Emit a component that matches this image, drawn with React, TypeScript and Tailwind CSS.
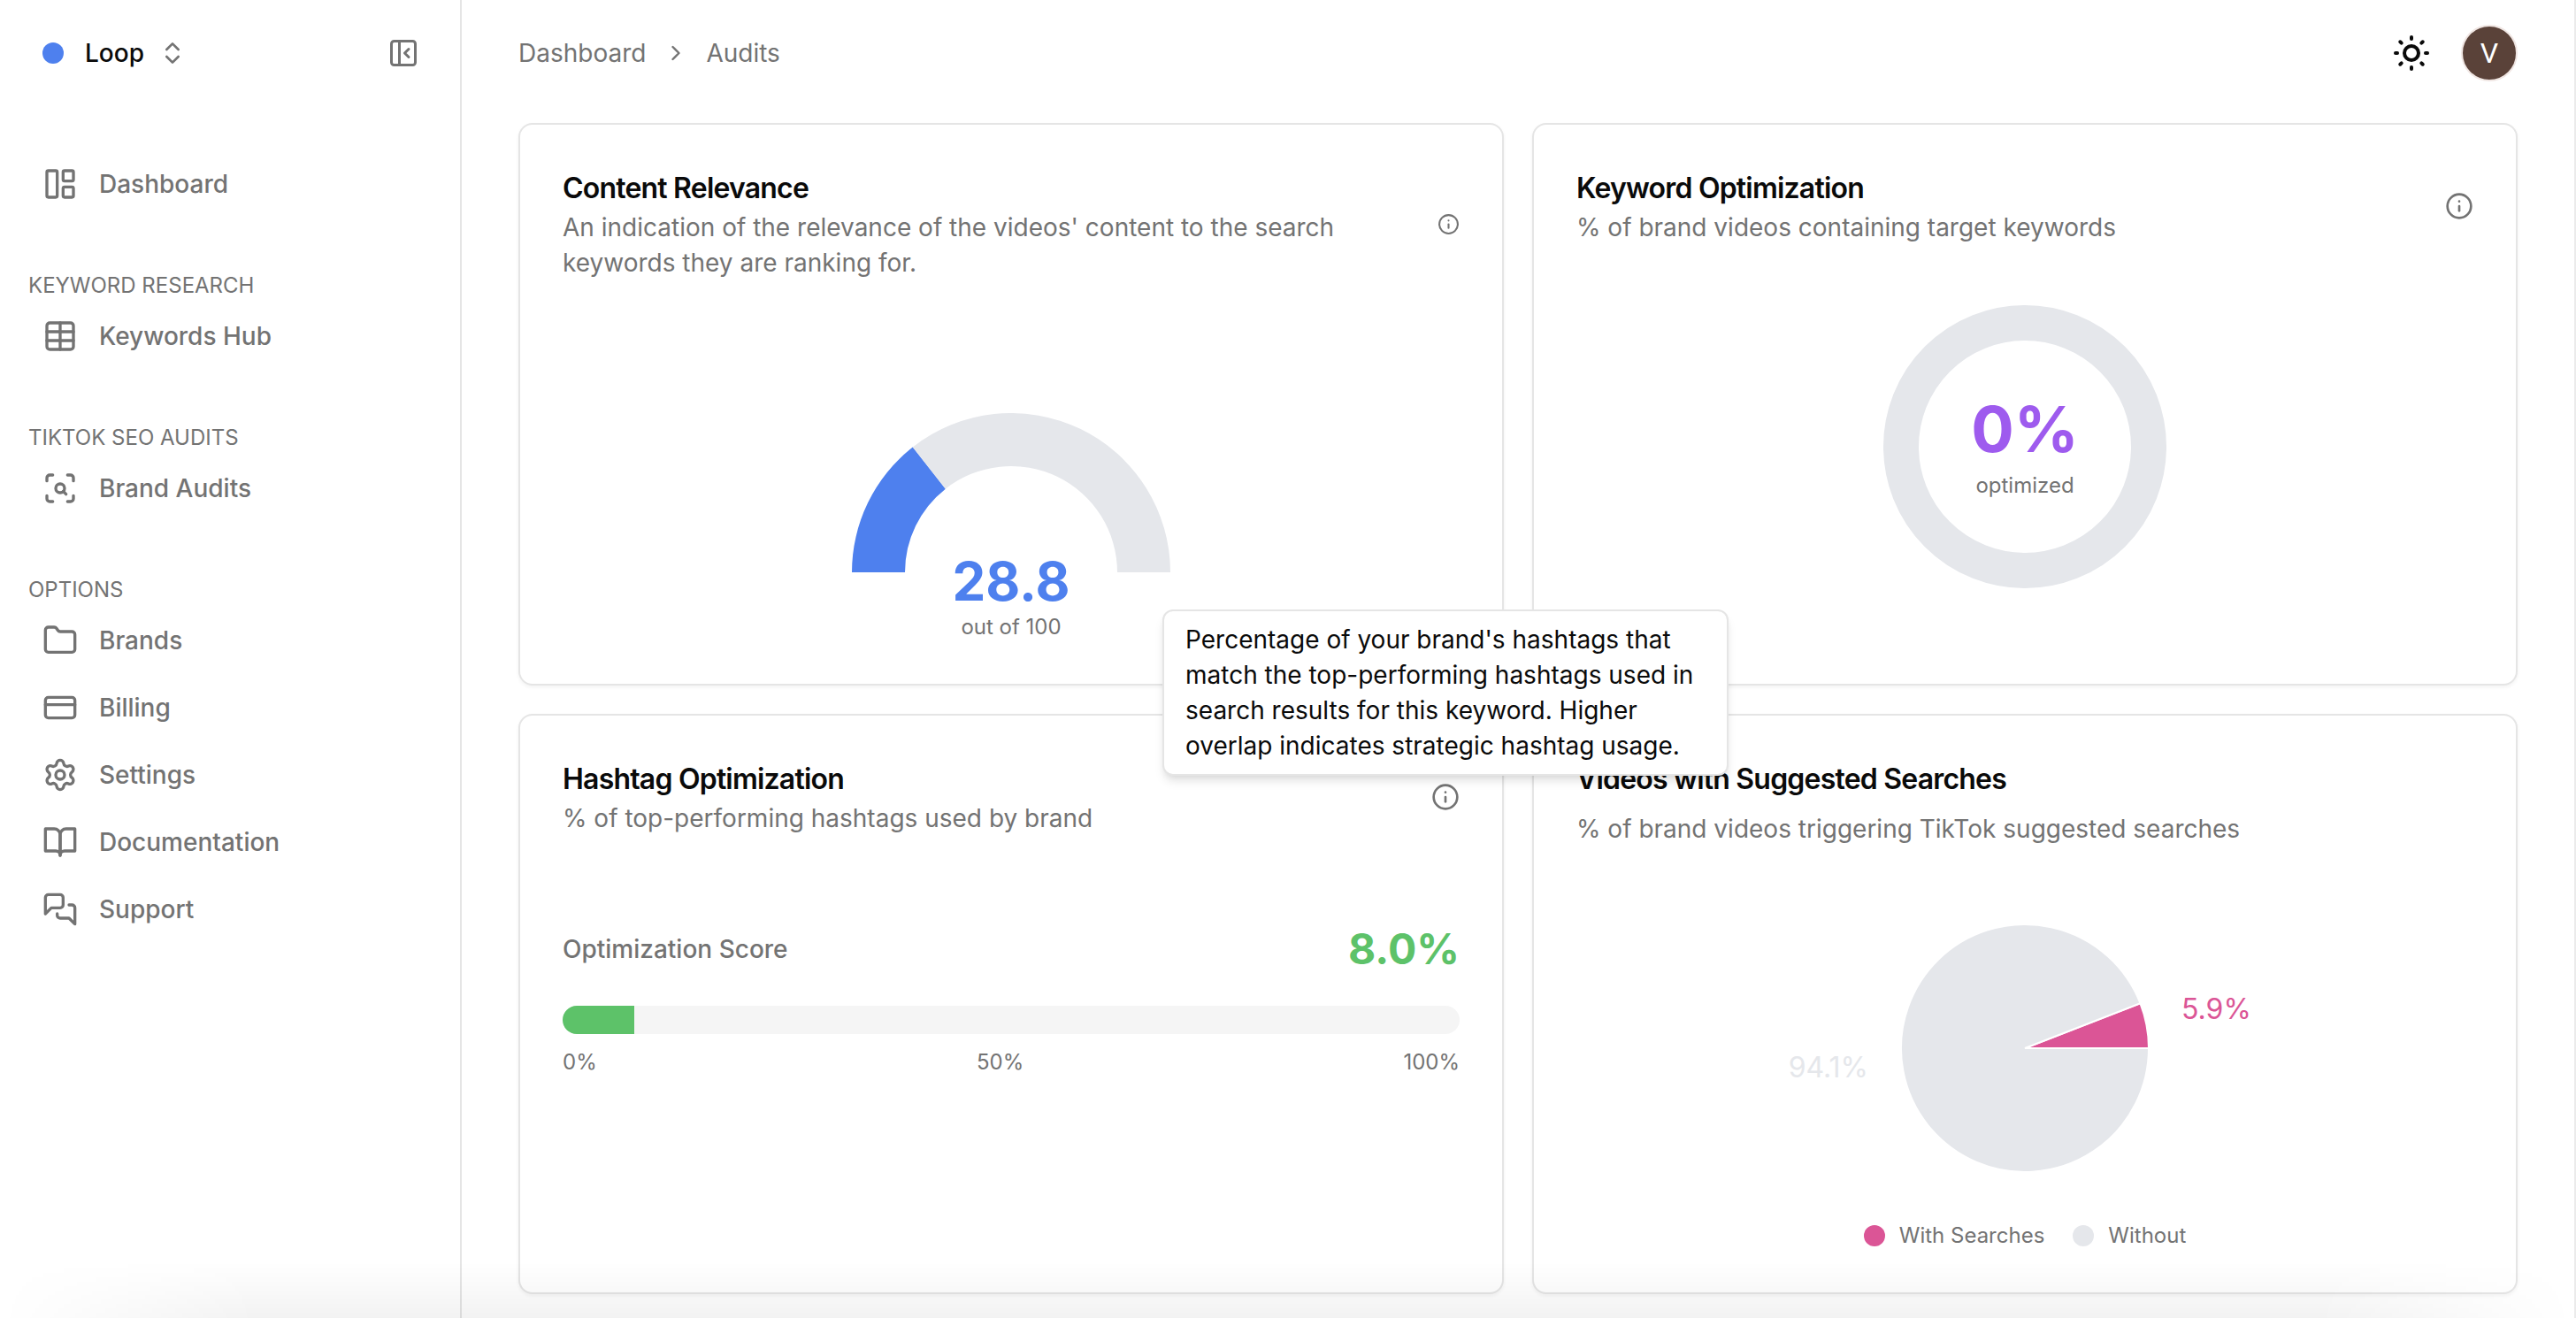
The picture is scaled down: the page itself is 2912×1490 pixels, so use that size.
import React from "react";
import {
  ChevronRight,
  ChevronsUpDown,
  CreditCard,
  Folder,
  Info,
  LayoutPanelLeft,
  PanelLeftClose,
  ScanSearch,
  Settings,
  SunMedium,
  Table,
} from "lucide-react";

type IconProps = { className?: string };

function BookIcon({ className }: IconProps) {
  return (
    <svg
      viewBox="0 0 24 24"
      fill="none"
      stroke="currentColor"
      strokeWidth="2"
      strokeLinecap="round"
      strokeLinejoin="round"
      className={className}
    >
      <path d="M2 3h6a4 4 0 0 1 4 4v14a3 3 0 0 0-3-3H2z" />
      <path d="M22 3h-6a4 4 0 0 0-4 4v14a3 3 0 0 1 3-3h7z" />
    </svg>
  );
}

function MessagesIcon({ className }: IconProps) {
  return (
    <svg
      viewBox="0 0 24 24"
      fill="none"
      stroke="currentColor"
      strokeWidth="2"
      strokeLinecap="round"
      strokeLinejoin="round"
      className={className}
    >
      <path d="M14 9a2 2 0 0 1-2 2H6l-4 4V4c0-1.1.9-2 2-2h8a2 2 0 0 1 2 2z" />
      <path d="M18 9h2a2 2 0 0 1 2 2v11l-4-4h-6a2 2 0 0 1-2-2v-1" />
    </svg>
  );
}

const sections = [
  { title: "", items: [{ label: "Dashboard", icon: LayoutPanelLeft }] },
  {
    title: "KEYWORD RESEARCH",
    items: [{ label: "Keywords Hub", icon: Table }],
  },
  {
    title: "TIKTOK SEO AUDITS",
    items: [{ label: "Brand Audits", icon: ScanSearch }],
  },
  {
    title: "OPTIONS",
    items: [
      { label: "Brands", icon: Folder },
      { label: "Billing", icon: CreditCard },
      { label: "Settings", icon: Settings },
      { label: "Documentation", icon: BookIcon },
      { label: "Support", icon: MessagesIcon },
    ],
  },
];

// point on a circle, degrees counted anticlockwise from the right
function polar(cx: number, cy: number, r: number, deg: number) {
  const a = (deg * Math.PI) / 180;
  return `${cx + r * Math.cos(a)} ${cy - r * Math.sin(a)}`;
}

function arcBand(from: number, to: number) {
  return [
    `M${polar(180, 180, 180, from)}`,
    `A180 180 0 0 1 ${polar(180, 180, 180, to)}`,
    `L${polar(180, 180, 120, to)}`,
    `A120 120 0 0 0 ${polar(180, 180, 120, from)}Z`,
  ].join(" ");
}

function Sidebar() {
  return (
    <aside className="w-[522px] shrink-0 border-r-2 border-[#e5e5e5]">
      <div className="flex h-[120px] items-center justify-between pl-12 pr-[46px]">
        <button className="flex items-center gap-6 font-medium text-[#0a0a0a]">
          <span className="size-6 rounded-full bg-[#4e80ee]"></span>
          <span className="flex items-center gap-4">
            Loop
            <ChevronsUpDown className="size-8 text-[#737373]" />
          </span>
        </button>
        <button aria-label="Collapse sidebar" className="text-[#737373]">
          <PanelLeftClose className="size-9" />
        </button>
      </div>
      <nav className="flex flex-col gap-[58px] pt-[50px]">
        {sections.map((section) => (
          <div key={section.title}>
            {section.title && (
              <h2 className="px-8 text-[24px] leading-[38px]">
                {section.title}
              </h2>
            )}
            {section.items.map((item) => (
              <a
                key={item.label}
                href="#"
                className="flex h-[76px] items-center gap-6 px-12 font-medium"
              >
                <item.icon className="size-10" />
                {item.label}
              </a>
            ))}
          </div>
        ))}
      </nav>
    </aside>
  );
}

function Header() {
  return (
    <header className="flex h-[120px] items-center justify-between px-16">
      <nav aria-label="Breadcrumb" className="flex items-center gap-5">
        <a href="#">Dashboard</a>
        <ChevronRight className="size-7" />
        <a href="#">Audits</a>
      </nav>
      <div className="flex items-center gap-8">
        <button aria-label="Toggle theme" className="text-[#0a0a0a]">
          <SunMedium className="size-12" />
        </button>
        <button className="flex size-16 items-center justify-center rounded-full border-2 border-[#f0e6e3] bg-[#5a4239] font-['Roboto',sans-serif] text-[32px] leading-none text-white">
          V
        </button>
      </div>
    </header>
  );
}

type CardProps = {
  title: string;
  text: string;
  info?: React.ReactNode;
  loose?: boolean;
  children: React.ReactNode;
};

function Card({ title, text, info, loose, children }: CardProps) {
  return (
    <section className="flex flex-col rounded-2xl border-2 border-[#e5e5e5] bg-white p-12 shadow-[0_2px_4px_rgba(0,0,0,0.05)]">
      <div className="flex items-center justify-between gap-4">
        <div className={loose ? "flex flex-col gap-3" : "flex flex-col"}>
          <h3 className="text-[32px] font-semibold leading-[48px] tracking-tight text-[#0a0a0a]">
            {title}
          </h3>
          <p>{text}</p>
        </div>
        {info}
      </div>
      {children}
    </section>
  );
}

function Relevance() {
  const score = 28.8;
  const split = 180 - score * 1.8;
  return (
    <Card
      title="Content Relevance"
      text="An indication of the relevance of the videos' content to the search keywords they are ranking for."
      info={
        <button aria-label="About content relevance" className="shrink-0">
          <Info className="size-[25px]" />
        </button>
      }
    >
      <div className="flex flex-col items-center pt-[150px]">
        <svg viewBox="0 0 360 258" className="w-[360px]">
          <path d={arcBand(180, split)} fill="#4e80ee" />
          <path d={arcBand(split, 0)} fill="#e5e7eb" />
          <text
            x="180"
            y="212"
            textAnchor="middle"
            fill="#4e80ee"
            className="text-[60px] font-bold"
          >
            {score}
          </text>
          <text
            x="180"
            y="250"
            textAnchor="middle"
            fill="#737373"
            className="text-[24px]"
          >
            out of 100
          </text>
        </svg>
      </div>
    </Card>
  );
}

function Keyword() {
  return (
    <Card
      title="Keyword Optimization"
      text="% of brand videos containing target keywords"
      info={
        <button aria-label="About keyword optimization" className="shrink-0">
          <Info className="size-8" />
        </button>
      }
    >
      <div className="flex justify-center pt-[68px]">
        <svg viewBox="0 0 320 320" className="w-[320px]">
          <circle
            cx="160"
            cy="160"
            r="140"
            fill="none"
            stroke="#e5e7eb"
            strokeWidth="40"
          />
          <text
            x="160"
            y="166"
            textAnchor="middle"
            fill="#9e5bee"
            className="text-[72px] font-bold"
          >
            0%
          </text>
          <text
            x="160"
            y="212"
            textAnchor="middle"
            fill="#737373"
            className="text-[24px]"
          >
            optimized
          </text>
        </svg>
      </div>
    </Card>
  );
}

function Hashtag() {
  const score = 8;
  return (
    <Card
      title="Hashtag Optimization"
      text="% of top-performing hashtags used by brand"
      info={
        <div className="relative shrink-0">
          <button
            aria-label="About hashtag optimization"
            aria-describedby="hashtag-tip"
            className="block"
          >
            <Info className="size-8" />
          </button>
          <div
            id="hashtag-tip"
            role="tooltip"
            className="absolute bottom-full left-1/2 z-10 mb-2 w-[640px] -translate-x-1/2 rounded-xl border-2 border-[#e5e5e5] bg-white px-6 py-3 text-[#0a0a0a] shadow-[0_8px_12px_-2px_rgba(0,0,0,0.1),0_4px_8px_-4px_rgba(0,0,0,0.1)]"
          >
            Percentage of your brand's hashtags that match the top-performing
            hashtags used in search results for this keyword. Higher overlap
            indicates strategic hashtag usage.
          </div>
        </div>
      }
    >
      <div className="pt-24">
        <div className="flex items-center justify-between">
          <span className="font-medium">Optimization Score</span>
          <span className="text-[48px] font-bold leading-[64px] text-[#5dc269]">
            {score.toFixed(1)}%
          </span>
        </div>
        <div className="mt-8 h-8 overflow-hidden rounded-full bg-[#f5f5f5]">
          <div
            className="h-full bg-[#5dc269]"
            style={{ width: `${score}%` }}
          ></div>
        </div>
        <div className="mt-4 flex justify-between text-[24px] leading-8">
          <span>0%</span>
          <span>50%</span>
          <span>100%</span>
        </div>
      </div>
    </Card>
  );
}

function Suggested() {
  const share = 5.9;
  const edge = polar(270, 142, 140, share * 3.6);
  return (
    <Card
      title="Videos with Suggested Searches"
      text="% of brand videos triggering TikTok suggested searches"
      loose
    >
      <div className="flex justify-center pt-[86px]">
        <svg viewBox="0 0 540 284" className="w-[540px]">
          <g stroke="#ffffff" strokeWidth="2">
            <path
              d={`M270 142 L410 142 A140 140 0 0 0 ${edge}Z`}
              fill="#db5596"
            />
            <path
              d={`M270 142 L${edge} A140 140 0 1 0 410 142Z`}
              fill="#e5e7eb"
            />
          </g>
          <text x="447" y="109" fill="#db5596" className="text-[32px]">
            {share}%
          </text>
          <text
            x="93"
            y="175"
            textAnchor="end"
            fill="#e5e7eb"
            className="text-[32px]"
          >
            {(100 - share).toFixed(1)}%
          </text>
        </svg>
      </div>
      <div className="flex justify-center gap-8 pt-[54px] text-[24px] leading-8">
        <div className="flex items-center gap-4">
          <span className="size-6 rounded-full bg-[#db5596]"></span>
          With Searches
        </div>
        <div className="flex items-center gap-4">
          <span className="size-6 rounded-full bg-[#e5e7eb]"></span>
          Without
        </div>
      </div>
    </Card>
  );
}

export default function App() {
  return (
    <div className="relative flex min-h-screen border-r-2 border-[#ebebeb] bg-white font-['Inter',sans-serif] text-[28px] leading-10 text-[#737373]">
      <Sidebar />
      <div className="min-w-0 flex-1">
        <Header />
        <main className="grid grid-cols-2 gap-8 px-16 pt-[19px]">
          <Relevance />
          <Keyword />
          <Hashtag />
          <Suggested />
        </main>
      </div>
      {/* soft fade along the bottom edge */}
      <div className="pointer-events-none absolute inset-x-0 bottom-0 h-16 bg-linear-to-t from-black/5 to-transparent mask-x-from-90%"></div>
    </div>
  );
}
